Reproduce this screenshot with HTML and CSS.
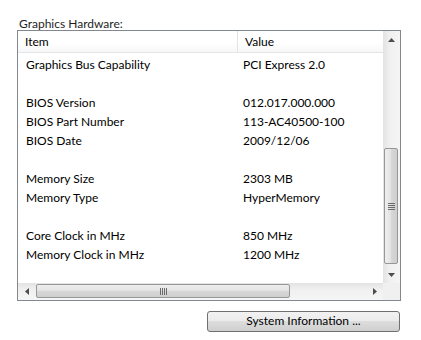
FILE: index.html
```html
<!DOCTYPE html>
<html lang="en">
  <head>
    <meta charset="UTF-8" />
    <title>Graphics Hardware</title>
    <link rel="stylesheet" href="styles.css">
  </head>
  <body>
    <div class="panel">
      <p class="caption">Graphics Hardware:</p>
      <div class="listbox">
        <div class="main">
          <div class="head">
            <div class="cell c1">Item</div>
            <div class="cell c2">Value</div>
          </div>
          <div class="rows">
            <div class="row"><span class="c1">Graphics Bus Capability</span><span class="c2">PCI Express 2.0</span></div>
            <div class="row"></div>
            <div class="row"><span class="c1">BIOS Version</span><span class="c2">012.017.000.000</span></div>
            <div class="row"><span class="c1">BIOS Part Number</span><span class="c2">113-AC40500-100</span></div>
            <div class="row"><span class="c1">BIOS Date</span><span class="c2">2009/12/06</span></div>
            <div class="row"></div>
            <div class="row"><span class="c1">Memory Size</span><span class="c2">2303 MB</span></div>
            <div class="row"><span class="c1">Memory Type</span><span class="c2">HyperMemory</span></div>
            <div class="row"></div>
            <div class="row"><span class="c1">Core Clock in MHz</span><span class="c2">850 MHz</span></div>
            <div class="row"><span class="c1">Memory Clock in MHz</span><span class="c2">1200 MHz</span></div>
          </div>
        </div>

        <!-- vertical scrollbar -->
        <div class="vbar">
          <div class="sbtn">
            <svg width="7" height="4" viewBox="0 0 7 4"><path d="M0 4 L3.5 0 L7 4 Z" fill="#4d4d4d"/></svg>
          </div>
          <div class="vtrack-top"></div>
          <div class="vthumb">
            <svg width="7" height="7" viewBox="0 0 7 7">
              <path d="M0 0.5 H7 M0 2.5 H7 M0 4.5 H7 M0 6.5 H7" stroke="#6b6b6b" stroke-width="1"/>
            </svg>
          </div>
          <div class="vtrack-bottom"></div>
          <div class="sbtn">
            <svg width="7" height="4" viewBox="0 0 7 4"><path d="M0 0 L3.5 4 L7 0 Z" fill="#4d4d4d"/></svg>
          </div>
        </div>

        <!-- horizontal scrollbar -->
        <div class="hbar">
          <div class="sbtn">
            <svg width="4" height="7" viewBox="0 0 4 7"><path d="M4 0 L0 3.5 L4 7 Z" fill="#4d4d4d"/></svg>
          </div>
          <div class="hthumb">
            <svg width="7" height="7" viewBox="0 0 7 7">
              <path d="M0.5 0 V7 M2.5 0 V7 M4.5 0 V7 M6.5 0 V7" stroke="#6b6b6b" stroke-width="1"/>
            </svg>
          </div>
          <div class="htrack"></div>
          <div class="sbtn">
            <svg width="4" height="7" viewBox="0 0 4 7"><path d="M0 0 L4 3.5 L0 7 Z" fill="#4d4d4d"/></svg>
          </div>
        </div>
        <div class="corner"></div>
      </div>

      <div class="actions">
        <button type="button" class="btn">System Information ...</button>
      </div>
    </div>
  </body>
</html>
```

FILE: styles.css
```css
* {
  margin: 0;
  padding: 0;
  box-sizing: border-box;
}

body {
  background: #fff;
  font-family: Lato, "Open Sans", sans-serif;
  font-size: 12px;
  color: #000;
}

.panel {
  width: 421px;
  height: 340px;
  padding: 16px 20px 0 17px;
}

.caption {
  height: 14px;
  line-height: 16px;
  padding-left: 2px;
  color: #1e1e1e;
}

.listbox {
  display: grid;
  grid-template-columns: 365px 17px;
  grid-template-rows: 252px 17px;
  width: 384px;
  height: 271px;
  border: 1px solid #828790;
}

.main {
  overflow: hidden;
}

.head {
  display: flex;
  height: 22px;
  line-height: 21px;
  border-bottom: 1px solid #e5e5e5;
  background: linear-gradient(#fff 0%, #fff 55%, #f6f7f8 100%);
}

.head .cell {
  padding-left: 7px;
}

.head .c1 {
  width: 220px;
  border-right: 1px solid #e3e3e3;
}

.rows {
  padding-top: 2px;
}

.row {
  display: flex;
  height: 19px;
  line-height: 19px;
}

.row .c1 {
  width: 220px;
  padding-left: 8px;
}

.row .c2 {
  padding-left: 5px;
}

.vbar {
  display: flex;
  flex-direction: column;
  background: linear-gradient(90deg, #e3e3e3, #f0f0f0 40%, #f5f5f5);
}

.sbtn {
  display: flex;
  align-items: center;
  justify-content: center;
  width: 17px;
  height: 17px;
  flex: none;
}

.vtrack-top {
  height: 100px;
}

.vthumb {
  display: flex;
  align-items: center;
  justify-content: center;
  height: 116px;
  margin: 0 2px 0 1px;
  border: 1px solid #979797;
  border-radius: 2px;
  background: linear-gradient(90deg, #eeeeee, #e4e4e4 45%, #d6d6d6 55%, #cfcfcf);
}

.vtrack-bottom {
  flex: 1;
}

.hbar {
  display: flex;
  background: linear-gradient(#e3e3e3, #f0f0f0 40%, #f5f5f5);
}

.hthumb {
  display: flex;
  align-items: center;
  justify-content: center;
  width: 254px;
  margin: 1px 0 2px 1px;
  border: 1px solid #979797;
  border-radius: 2px;
  background: linear-gradient(#eeeeee, #e4e4e4 45%, #d6d6d6 55%, #cfcfcf);
}

.htrack {
  flex: 1;
}

.corner {
  background: #f0f0f0;
}

.actions {
  display: flex;
  justify-content: flex-end;
  padding-top: 10px;
  padding-right: 1px;
}

.btn {
  width: 193px;
  height: 21px;
  padding-bottom: 2px;
  border: 1px solid #707070;
  border-radius: 3px;
  background: linear-gradient(#f2f2f2 0%, #ebebeb 49%, #dddddd 50%, #cfcfcf 100%);
  font-family: Lato, "Open Sans", sans-serif;
  font-size: 12px;
  color: #000;
}
```
